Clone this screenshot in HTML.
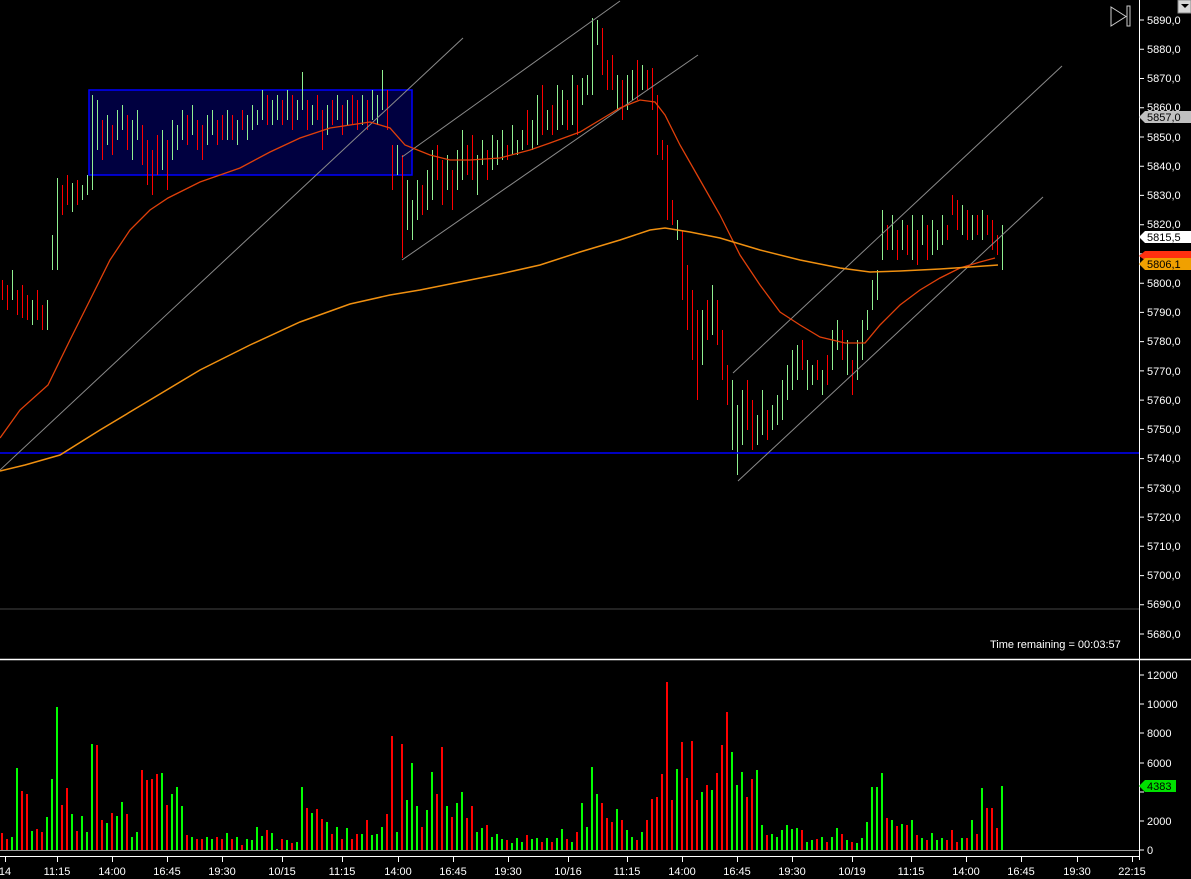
<!DOCTYPE html>
<html><head><meta charset="utf-8"><style>
html,body{margin:0;padding:0;background:#000;width:1191px;height:879px;overflow:hidden}
svg{display:block}
text{font-family:"Liberation Sans",sans-serif;font-size:11px;fill:#fff}
</style></head><body>
<svg width="1191" height="879" viewBox="0 0 1191 879" xmlns="http://www.w3.org/2000/svg">
<rect width="1191" height="879" fill="#000"/>
<rect x="89" y="90" width="323" height="85" fill="#000040" stroke="#0000ff" stroke-width="1.5"/>
<path fill="none" stroke="#90f090" stroke-width="1" d="M12.5 270V300M32.5 300V325M47.5 300V330M52.5 235V270M57.5 178V270M72.5 183V212M82.5 185V200M87.5 175V195M92.5 95V190M97.5 100V150M107.5 115V145M117.5 110V140M122.5 105V130M132.5 120V160M137.5 110V140M162.5 130V170M172.5 120V160M177.5 125V150M182.5 110V140M192.5 105V135M207.5 115V145M212.5 110V135M227.5 110V140M237.5 120V145M247.5 115V140M252.5 105V130M257.5 110V125M262.5 90V120M272.5 100V125M277.5 95V120M287.5 90V120M297.5 100V120M302.5 72V110M312.5 105V125M327.5 105V135M337.5 95V120M347.5 100V125M362.5 95V125M372.5 90V120M377.5 95V125M382.5 70V110M397.5 145V175M407.5 180V230M412.5 200V240M417.5 180V220M427.5 170V210M432.5 150V200M447.5 155V190M457.5 150V190M462.5 130V180M477.5 155V195M482.5 140V165M492.5 135V170M497.5 140V165M502.5 130V160M512.5 125V155M517.5 140V155M522.5 130V150M532.5 120V150M537.5 95V145M547.5 110V130M557.5 85V130M562.5 90V125M572.5 75V125M582.5 78V105M587.5 75V95M592.5 18V95M597.5 20V45M617.5 75V110M627.5 75V110M632.5 70V100M642.5 65V90M677.5 220V240M702.5 310V365M712.5 285V335M732.5 380V450M737.5 405V475M742.5 390V445M757.5 415V445M762.5 390V435M772.5 405V430M777.5 395V425M782.5 380V420M787.5 365V400M792.5 350V390M797.5 345V380M807.5 360V390M812.5 365V385M822.5 370V395M832.5 330V370M837.5 320V350M847.5 340V375M857.5 340V380M862.5 320V360M867.5 310V330M872.5 280V310M877.5 270V300M882.5 210V260M892.5 215V250M902.5 220V250M912.5 215V260M922.5 215V245M932.5 220V255M937.5 230V250M942.5 215V245M962.5 205V235M972.5 215V240M982.5 210V240M1002.5 225V270"/>
<path fill="none" stroke="#ff0000" stroke-width="1" d="M2.5 280V300M7.5 285V310M17.5 290V315M22.5 285V318M27.5 295V320M37.5 290V320M42.5 305V330M62.5 185V215M67.5 175V205M77.5 180V205M102.5 120V160M112.5 125V155M127.5 115V150M142.5 125V165M147.5 140V185M152.5 150V195M157.5 135V175M167.5 140V190M187.5 115V145M197.5 120V150M202.5 125V160M217.5 120V145M222.5 115V140M232.5 115V140M242.5 110V130M267.5 95V125M282.5 100V125M292.5 95V130M307.5 100V130M317.5 95V120M322.5 110V150M332.5 100V125M342.5 105V135M352.5 95V125M357.5 100V130M367.5 100V130M387.5 90V130M392.5 145V190M402.5 155V258M422.5 185V215M437.5 145V180M442.5 160V205M452.5 170V210M467.5 145V175M472.5 135V180M487.5 150V180M507.5 145V160M527.5 110V145M542.5 85V135M552.5 105V135M567.5 100V130M577.5 85V135M602.5 28V75M607.5 60V90M612.5 55V90M622.5 80V120M637.5 60V100M647.5 70V90M652.5 68V110M657.5 95V155M662.5 140V160M667.5 145V220M672.5 200V225M682.5 230V300M687.5 265V330M692.5 290V360M697.5 310V400M707.5 300V340M717.5 300V345M722.5 330V380M727.5 365V405M747.5 380V430M752.5 400V450M767.5 410V440M802.5 340V370M817.5 360V380M827.5 355V385M842.5 330V360M852.5 360V395M887.5 225V250M897.5 230V260M907.5 225V255M917.5 230V265M927.5 225V260M947.5 225V240M952.5 195V215M957.5 200V230M967.5 210V240M977.5 215V235M987.5 215V235M992.5 220V250M997.5 235V255"/>
<line x1="0" y1="453" x2="1139" y2="453" stroke="#0000ff" stroke-width="1.5"/>
<line x1="0" y1="609" x2="1139" y2="609" stroke="#444" stroke-width="1"/>
<line x1="0" y1="659.5" x2="1191" y2="659.5" stroke="#fff" stroke-width="1.5"/>
<g stroke="#8a8a8a" stroke-width="1" fill="none">
<line x1="0" y1="470" x2="463" y2="38"/>
<line x1="402" y1="157" x2="620" y2="1"/>
<line x1="402" y1="260" x2="698" y2="55"/>
<line x1="733" y1="373" x2="1062" y2="66"/>
<line x1="738" y1="481" x2="1043" y2="197"/>
</g>
<polyline fill="none" stroke="#e0400a" stroke-width="1.3" points="0,438 20,410 48,385 70,340 90,300 110,260 130,230 150,210 168,198 200,182 240,168 270,152 300,138 330,128 370,122 390,128 405,145 430,155 450,160 470,160 500,158 530,150 550,143 580,132 600,120 620,108 640,100 655,102 665,115 680,145 700,180 720,215 740,255 760,285 780,312 800,325 820,337 845,343 865,343 880,325 900,305 920,290 940,278 960,268 980,262 995,258"/>
<polyline fill="none" stroke="#f09010" stroke-width="1.5" points="0,471 25,465 60,455 100,430 150,400 200,370 250,345 300,322 350,304 390,295 420,290 460,282 500,274 540,265 580,252 620,240 650,230 665,228 690,232 720,238 760,250 800,260 840,268 870,272 900,271 940,269 970,267 998,265"/>
<path fill="none" stroke="#00ff00" stroke-width="2" d="M12 850V837M17 850V768M32 850V831M47 850V817M52 850V779M57 850V707M72 850V814M82 850V816M87 850V832M92 850V744M107 850V823M117 850V816M122 850V802M132 850V837M137 850V832M162 850V773M172 850V794M177 850V787M182 850V806M192 850V837M207 850V837M212 850V839M227 850V833M237 850V837M247 850V839M252 850V840M257 850V827M262 850V836M272 850V833M277 850V849M287 850V840M297 850V842M302 850V787M312 850V813M327 850V822M337 850V827M347 850V828M362 850V834M372 850V835M377 850V834M382 850V827M397 850V832M407 850V800M412 850V763M417 850V806M427 850V810M432 850V772M447 850V806M457 850V803M462 850V792M477 850V832M482 850V828M492 850V837M497 850V834M502 850V839M512 850V843M517 850V838M522 850V842M532 850V839M537 850V838M547 850V838M557 850V838M562 850V829M572 850V842M582 850V803M587 850V827M592 850V767M597 850V794M617 850V809M627 850V830M632 850V837M642 850V832M677 850V769M702 850V792M712 850V790M732 850V752M737 850V785M742 850V772M757 850V770M762 850V825M772 850V834M777 850V837M782 850V830M787 850V825M792 850V829M797 850V828M807 850V842M812 850V840M822 850V837M832 850V837M837 850V828M847 850V840M857 850V843M862 850V838M867 850V822M872 850V787M877 850V787M882 850V773M892 850V820M902 850V824M912 850V820M922 850V838M932 850V833M937 850V840M942 850V838M962 850V838M972 850V820M982 850V788M1002 850V786"/>
<path fill="none" stroke="#ff0000" stroke-width="2" d="M2 850V833M7 850V839M22 850V791M27 850V794M37 850V829M42 850V832M62 850V805M67 850V788M77 850V831M97 850V745M102 850V820M112 850V813M127 850V814M142 850V770M147 850V780M152 850V779M157 850V774M167 850V805M187 850V835M197 850V839M202 850V839M217 850V837M222 850V839M232 850V839M242 850V845M267 850V830M282 850V839M292 850V843M307 850V808M317 850V809M322 850V819M332 850V834M342 850V839M352 850V839M357 850V834M367 850V820M387 850V814M392 850V736M402 850V744M422 850V827M437 850V794M442 850V747M452 850V817M467 850V818M472 850V806M487 850V825M507 850V840M527 850V835M542 850V842M552 850V842M567 850V839M577 850V832M602 850V803M607 850V818M612 850V822M622 850V820M637 850V840M647 850V820M652 850V799M657 850V797M662 850V774M667 850V682M672 850V800M682 850V742M687 850V778M692 850V741M697 850V800M707 850V785M717 850V773M722 850V745M727 850V712M747 850V797M752 850V779M767 850V835M802 850V830M817 850V839M827 850V842M842 850V834M852 850V842M887 850V818M897 850V826M907 850V825M917 850V835M927 850V840M947 850V840M952 850V830M957 850V842M967 850V838M977 850V834M987 850V808M992 850V808M997 850V828"/>
<line x1="1139.5" y1="0" x2="1139.5" y2="860" stroke="#fff" stroke-width="1"/>
<line x1="0" y1="856.5" x2="1139" y2="856.5" stroke="#fff" stroke-width="1"/>
<line x1="0" y1="850.5" x2="1139" y2="850.5" stroke="#999" stroke-width="1"/>
<path stroke="#fff" stroke-width="1" fill="none" d="M1139 20H1144M1139 49.2H1144M1139 78.5H1144M1139 107.7H1144M1139 137H1144M1139 166.2H1144M1139 195.4H1144M1139 224.7H1144M1139 253.9H1144M1139 283.2H1144M1139 312.4H1144M1139 341.6H1144M1139 370.9H1144M1139 400.1H1144M1139 429.4H1144M1139 458.6H1144M1139 487.8H1144M1139 517.1H1144M1139 546.3H1144M1139 575.6H1144M1139 604.8H1144M1139 634H1144M1139 675H1144M1139 704H1144M1139 733H1144M1139 763H1144M1139 792H1144M1139 821H1144M1139 850H1144M5.5 856V862M57.5 856V862M112.5 856V862M167.5 856V862M222.5 856V862M282.5 856V862M342.5 856V862M398.5 856V862M453.5 856V862M508.5 856V862M568.5 856V862M627.5 856V862M682.5 856V862M737.5 856V862M792.5 856V862M852.5 856V862M911.5 856V862M966.5 856V862M1021.5 856V862M1077.5 856V862M1132.5 856V862"/>
<g>
<text x="1147" y="24">5890,0</text><text x="1147" y="53">5880,0</text><text x="1147" y="82">5870,0</text><text x="1147" y="111">5860,0</text><text x="1147" y="141">5850,0</text><text x="1147" y="170">5840,0</text><text x="1147" y="199">5830,0</text><text x="1147" y="228">5820,0</text><text x="1147" y="287">5800,0</text><text x="1147" y="316">5790,0</text><text x="1147" y="345">5780,0</text><text x="1147" y="375">5770,0</text><text x="1147" y="404">5760,0</text><text x="1147" y="433">5750,0</text><text x="1147" y="462">5740,0</text><text x="1147" y="492">5730,0</text><text x="1147" y="521">5720,0</text><text x="1147" y="550">5710,0</text><text x="1147" y="579">5700,0</text><text x="1147" y="608">5690,0</text><text x="1147" y="638">5680,0</text>
<text x="1147" y="679">12000</text><text x="1147" y="708">10000</text><text x="1147" y="737">8000</text><text x="1147" y="767">6000</text><text x="1147" y="825">2000</text><text x="1147" y="854">0</text>
</g>
<g text-anchor="middle">
<text x="5" y="875">14</text><text x="57" y="875">11:15</text><text x="112" y="875">14:00</text><text x="167" y="875">16:45</text><text x="222" y="875">19:30</text><text x="282" y="875">10/15</text><text x="342" y="875">11:15</text><text x="398" y="875">14:00</text><text x="453" y="875">16:45</text><text x="508" y="875">19:30</text><text x="568" y="875">10/16</text><text x="627" y="875">11:15</text><text x="682" y="875">14:00</text><text x="737" y="875">16:45</text><text x="792" y="875">19:30</text><text x="852" y="875">10/19</text><text x="911" y="875">11:15</text><text x="966" y="875">14:00</text><text x="1021" y="875">16:45</text><text x="1077" y="875">19:30</text><text x="1132" y="875">22:15</text>
</g>
<text x="990" y="648">Time remaining = 00:03:57</text>
<polygon points="1139,117 1145,111 1191,111 1191,123 1145,123" fill="#c0c0c0"/>
<text x="1147" y="121" style="fill:#000">5857,0</text>
<polygon points="1139,237 1145,231 1191,231 1191,243 1145,243" fill="#fff"/>
<text x="1147" y="241" style="fill:#000">5815,5</text>
<polygon points="1139,256 1145,251 1191,251 1191,260 1145,260" fill="#ff3010"/>
<polygon points="1139,264 1145,258 1191,258 1191,270 1145,270" fill="#f0a000"/>
<text x="1147" y="268" style="fill:#000">5806,1</text>
<polygon points="1139,786 1145,780 1176,780 1176,792 1145,792" fill="#00e000"/>
<text x="1147" y="790" style="fill:#000">4383</text>
<polygon points="1111,7 1111,26 1126,16.5" fill="none" stroke="#ccc" stroke-width="1"/>
<rect x="1127" y="6" width="3" height="20" fill="none" stroke="#ccc" stroke-width="1"/>
<rect x="1178" y="0" width="13" height="13" fill="#d8d8d8" stroke="#888"/>
<polygon points="1181,4 1189,4 1185,8" fill="#000"/>
</svg>
</body></html>
